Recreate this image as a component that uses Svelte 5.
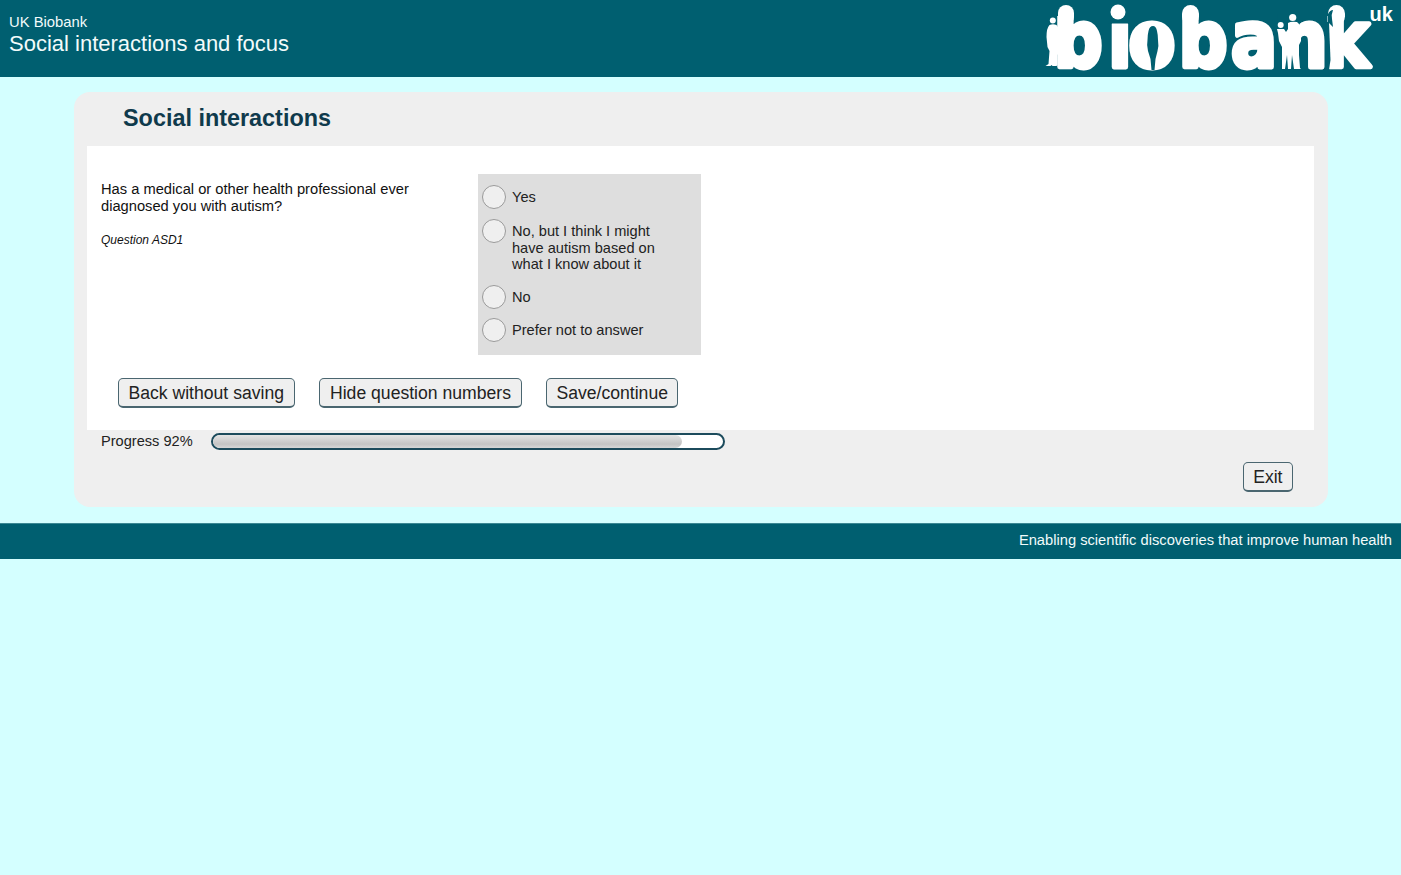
<script lang="ts">
  const options = [
    'Yes',
    'No, but I think I might have autism based on what I know about it',
    'No',
    'Prefer not to answer'
  ];
  const buttons = ['Back without saving', 'Hide question numbers', 'Save/continue'];
  const progress = 92;
  // the logo letters are set one by one, they do not follow the font's advances
  const letterX = '10 72 95 152 211.500 266 317';
</script>

<div class="page">
  <header class="top">
    <div class="titles">
      <div class="org">UK Biobank</div>
      <div class="study">Social interactions and focus</div>
    </div>
    <svg class="logo" width="356" height="77" viewBox="0 0 356 77" role="img" aria-label="biobank uk">
      <text class="word" transform="scale(0.88 1)" x={letterX} y="66.5">biobank</text>
      <text class="uk" x="324.500" y="21">uk</text>

      <!-- rounded stem tops and the round dot of the i -->
      <g fill="#005f70">
        <rect x="10" y="0" width="24" height="16" />
        <rect x="63" y="0" width="21" height="23.5" />
        <rect x="134" y="0" width="24" height="16" />
        <rect x="279" y="0" width="26" height="16" />
      </g>
      <g fill="#fff">
        <rect x="13" y="5" width="16" height="20" rx="8" />
        <circle cx="73" cy="12" r="7.5" />
        <rect x="137" y="5" width="17" height="20" rx="8.5" />
        <rect x="283" y="5" width="17" height="20" rx="8.5" />
      </g>

      <!-- man left of the first b -->
      <g fill="#fff">
        <circle cx="7.8" cy="20.500" r="3" />
        <path d="M4.500 25 q3.500 -1.500 7 0 l2 3 h2 v21 l-3 6 v10 l-1 1 h-4 l-1 -1 -1 1 h-5 l3 -2 1 -13 -2 -4 -1 -10 q0 -9 3 -12z" />
      </g>

      <!-- woman standing in the o -->
      <ellipse cx="108.5" cy="46" rx="11" ry="16" fill="#fff" />
      <path fill="#005f70" d="M108 26 q3 0 4 5 q1 4 1 9 q1 6 -.5 11 l-2 8 -1 11 h-3 l-1 -11 -2.500 -8 q-1.500 -6 -.5 -11 q0 -5 1 -9 q1 -5 4.500 -5z" />

      <!-- two people in front of the n -->
      <rect x="232.500" y="14" width="22" height="57" fill="#005f70" />
      <g fill="#fff">
        <circle cx="235.700" cy="25" r="3" />
        <path d="M232 29 h7 l2 3 2 -3 v-6 q3 -2 9 -1 l4 4 v15 l-2 4 v10 l1 13 1 1 h-7 l-2 -14 -1 14 h-3 l-1 -14 -2 14 h-3 v-22 l-3 -6 -1 -8z" />
        <circle cx="247.700" cy="17.500" r="3.600" />
      </g>

      <!-- long hair on the k stem -->
      <path fill="#005f70" d="M283 14 q2 -4 5 -4 q-2 5 -1 9 l1 8 q-3 -3 -5 -5z" />
      <path fill="#005f70" d="M280.500 22 h3.500 l1.500 38 -1.500 10 h-3.500z" />
    </svg>
  </header>

  <main class="panel">
    <h1>Social interactions</h1>
    <div class="form">
      <div class="row">
        <div class="question">
          <p>Has a medical or other health professional ever diagnosed you with autism?</p>
          <p class="code">Question ASD1</p>
        </div>
        <div class="answers">
          {#each options as opt}
            <label class="answer">
              <span class="radio"></span>
              <span class="text">{opt}</span>
            </label>
          {/each}
        </div>
      </div>
      <div class="actions">
        {#each buttons as b}
          <button type="button">{b}</button>
        {/each}
      </div>
    </div>
    <div class="progress">
      <span>Progress {progress}%</span>
      <div class="track"><div class="bar" style="width: {progress}%"></div></div>
    </div>
    <div class="exit"><button type="button">Exit</button></div>
  </main>

  <footer class="bottom">Enabling scientific discoveries that improve human health</footer>
</div>

<style>
  :global(body) {
    margin: 0;
    background: #d4ffff;
  }

  .page {
    min-height: 875px;
    background: #d4ffff;
    font-family: 'Liberation Sans', Arial, sans-serif;
    color: #111;
    overflow: hidden;
  }

  .top {
    height: 77px;
    background: #005f70;
    display: flex;
    justify-content: space-between;
  }

  .titles {
    padding: 13px 0 0 9px;
    color: #f2fbfb;
  }

  .org {
    font-size: 14.8px;
    line-height: 18px;
  }

  .study {
    font-size: 22px;
    line-height: 26px;
  }

  .logo {
    display: block;
    flex: none;
  }

  .word {
    font-family: 'DejaVu Sans', sans-serif;
    font-size: 77.5px;
    font-weight: 700;
    fill: #fff;
    stroke: #fff;
    stroke-width: 5px;
    stroke-linejoin: round;
  }

  .uk {
    font-family: 'Liberation Sans', Arial, sans-serif;
    font-size: 20px;
    font-weight: 700;
    fill: #fff;
  }

  .panel {
    margin: 15px 73px 0 74px;
    height: 415px;
    box-sizing: border-box;
    background: #efefef;
    border-radius: 16px;
    padding: 0 14px 0 13px;
  }

  h1 {
    margin: 0;
    padding: 0 0 0 36px;
    height: 54px;
    font-size: 23.4px;
    line-height: 53px;
    font-weight: 700;
    color: #0f3a4c;
  }

  .form {
    background: #fff;
    height: 284px;
    box-sizing: border-box;
    padding: 28px 14px 0;
  }

  .row {
    display: flex;
  }

  .question {
    width: 377px;
    flex: none;
    font-size: 14.7px;
    line-height: 17px;
    padding-top: 7px;
    box-sizing: border-box;
  }

  .question p {
    margin: 0;
    width: 330px;
  }

  .question .code {
    margin-top: 18px;
    font-size: 12px;
    line-height: 15px;
    font-style: italic;
  }

  .answers {
    width: 223px;
    height: 181px;
    box-sizing: border-box;
    background: #dedede;
    padding: 11px 4px 0;
    display: flex;
    flex-direction: column;
    gap: 10px;
  }

  .answer {
    display: flex;
    gap: 6px;
    font-size: 14.6px;
    line-height: 16.6px;
    color: #222;
  }

  .answer:last-child {
    margin-top: -1px;
  }

  .radio {
    flex: none;
    width: 24px;
    height: 24px;
    box-sizing: border-box;
    border-radius: 50%;
    border: 1.5px solid #9a9a9a;
    background: #efefef;
  }

  .text {
    padding: 4px 0 2px;
    width: 150px;
  }

  .actions {
    display: flex;
    gap: 24px;
    margin-top: 23px;
    padding-left: 17px;
  }

  button {
    height: 30px;
    padding: 1px 9.5px 0;
    font-family: inherit;
    font-size: 17.6px;
    color: #222;
    background: #efefef;
    border: 1px solid #4a6670;
    border-bottom-width: 2px;
    border-radius: 5px;
  }

  .actions button:nth-child(2) {
    padding: 1px 10.5px 0;
  }

  .actions button:nth-child(3) {
    padding: 1px 9px 0;
  }

  .progress {
    display: flex;
    align-items: center;
    gap: 18px;
    padding-left: 14px;
    height: 22px;
    font-size: 14.6px;
    color: #222;
  }

  .track {
    width: 510px;
    height: 13px;
    border: 2px solid #1c4b5c;
    border-radius: 9px;
    background: #fff;
    overflow: hidden;
  }

  .bar {
    height: 100%;
    border-radius: 7px;
    background: linear-gradient(#e4e4e4, #c4c4c4 70%, #d6d6d6);
  }

  .exit {
    display: flex;
    justify-content: flex-end;
    padding: 10px 21px 0 0;
  }

  .bottom {
    margin-top: 16px;
    height: 36px;
    background: #005f70;
    border-top: 1px solid #3b8894;
    box-sizing: border-box;
    color: #f2fbfb;
    font-size: 14.7px;
    line-height: 33px;
    text-align: right;
    padding-right: 9px;
  }
</style>
